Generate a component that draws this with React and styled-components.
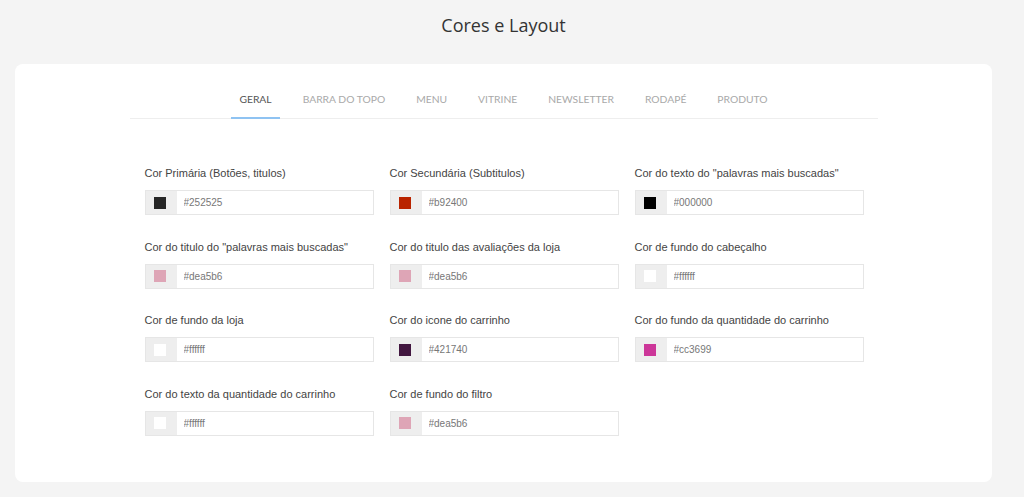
import React, { useState } from "react";
import styled, { createGlobalStyle } from "styled-components";

const tabs = [
  "Geral",
  "Barra do topo",
  "Menu",
  "Vitrine",
  "Newsletter",
  "Rodapé",
  "Produto",
];

const fields = [
  { label: "Cor Primária (Botões, titulos)", value: "#252525" },
  { label: "Cor Secundária (Subtitulos)", value: "#b92400" },
  { label: 'Cor do texto do "palavras mais buscadas"', value: "#000000" },
  { label: 'Cor do titulo do "palavras mais buscadas"', value: "#dea5b6" },
  { label: "Cor do titulo das avaliações da loja", value: "#dea5b6" },
  { label: "Cor de fundo do cabeçalho", value: "#ffffff" },
  { label: "Cor de fundo da loja", value: "#ffffff" },
  { label: "Cor do icone do carrinho", value: "#421740" },
  { label: "Cor do fundo da quantidade do carrinho", value: "#cc3699" },
  { label: "Cor do texto da quantidade do carrinho", value: "#ffffff" },
  { label: "Cor de fundo do filtro", value: "#dea5b6" },
];

function App() {
  const [active, setActive] = useState(0);

  return (
    <>
      <GlobalStyle />
      <Page>
        <Title>Cores e Layout</Title>
        <Card>
          <Content>
            <Tabs>
              {tabs.map((tab, i) => (
                <Tab key={tab} $active={i === active} onClick={() => setActive(i)}>
                  {tab}
                </Tab>
              ))}
            </Tabs>
            <Grid>
              {fields.map((field) => (
                <Field key={field.label}>
                  <Label>{field.label}</Label>
                  <InputGroup>
                    <Addon>
                      <Swatch $color={field.value} />
                    </Addon>
                    <Input defaultValue={field.value} />
                  </InputGroup>
                </Field>
              ))}
            </Grid>
          </Content>
        </Card>
      </Page>
    </>
  );
}

export default App;

const GlobalStyle = createGlobalStyle`
  body {
    margin: 0;
    background: #f4f4f4;
    font-family: "Liberation Sans", Arial, sans-serif;
  }
`;

const Page = styled.div`
  padding: 0 32px 16px 15px;
`;

const Title = styled.h1`
  margin: 0;
  height: 64px;
  padding-top: 13px;
  box-sizing: border-box;
  text-align: center;
  font-family: "Open Sans", sans-serif;
  font-size: 18px;
  font-weight: 400;
  line-height: 24px;
  color: #333333;
`;

const Card = styled.div`
  background: #ffffff;
  border-radius: 8px;
  padding: 16px 0 46px;
`;

const Content = styled.div`
  width: 748px;
  margin: 0 auto;
`;

const Tabs = styled.nav`
  display: flex;
  justify-content: center;
  gap: 15px;
  border-bottom: 1px solid #eeeeee;
`;

const Tab = styled.a`
  padding: 12px 8px 11px;
  margin-bottom: -1px;
  font-family: Lato, sans-serif;
  font-size: 10.3px;
  line-height: 14px;
  text-transform: uppercase;
  color: ${(p) => (p.$active ? "#555555" : "#a9a9a9")};
  border-bottom: 2px solid ${(p) => (p.$active ? "#8fc3f2" : "transparent")};
  cursor: pointer;
`;

const Grid = styled.div`
  display: grid;
  grid-template-columns: repeat(3, 229px);
  column-gap: 16px;
  row-gap: 24.5px;
  padding: 47px 15px 0;
`;

const Field = styled.div`
  display: flex;
  flex-direction: column;
`;

const Label = styled.label`
  font-size: 11px;
  line-height: 14px;
  color: #444444;
  margin-bottom: 10px;
  white-space: nowrap;
`;

const InputGroup = styled.div`
  display: flex;
  height: 25px;
  box-sizing: border-box;
  border: 1px solid #e6e6e6;
`;

const Addon = styled.div`
  width: 31px;
  flex-shrink: 0;
  background: #eeeeee;
  display: flex;
  align-items: center;
  padding-left: 8px;
  box-sizing: border-box;
`;

const Swatch = styled.span`
  width: 12px;
  height: 12px;
  background: ${(p) => p.$color};
`;

const Input = styled.input`
  flex: 1;
  min-width: 0;
  border: none;
  outline: none;
  padding: 0 0 0 7px;
  font-family: "Liberation Sans", Arial, sans-serif;
  font-size: 10px;
  color: #777777;
  background: #ffffff;
`;
